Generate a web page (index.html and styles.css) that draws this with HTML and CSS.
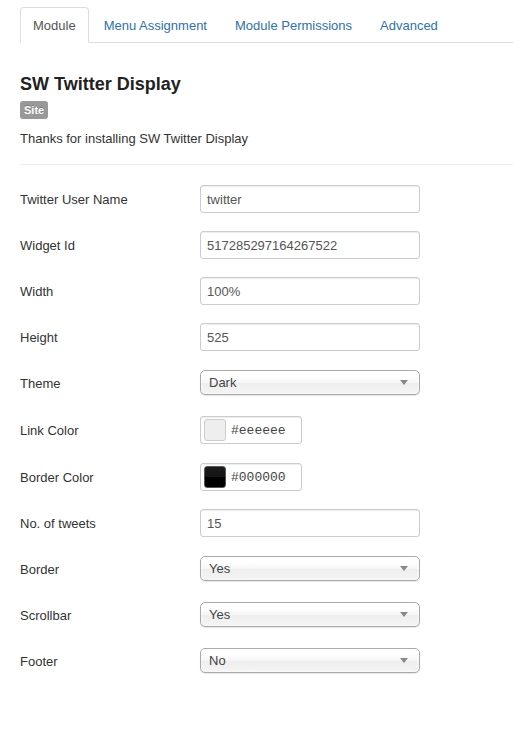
FILE: index.html
```html
<!DOCTYPE html>
<html>
<head>
<meta charset="utf-8">
<link rel="stylesheet" href="styles.css">
</head>
<body>
<div class="page">
  <ul class="tabs">
    <li class="tab active"><a>Module</a></li>
    <li class="tab"><a>Menu Assignment</a></li>
    <li class="tab"><a>Module Permissions</a></li>
    <li class="tab"><a>Advanced</a></li>
  </ul>

  <h2 class="title">SW Twitter Display</h2>
  <div class="badge-row"><span class="badge">Site</span></div>
  <p class="desc">Thanks for installing SW Twitter Display</p>
  <hr class="sep">

  <form class="form">
    <div class="group"><label>Twitter User Name</label><div class="input">twitter</div></div>
    <div class="group"><label>Widget Id</label><div class="input">517285297164267522</div></div>
    <div class="group"><label>Width</label><div class="input">100%</div></div>
    <div class="group"><label>Height</label><div class="input">525</div></div>
    <div class="group tall"><label>Theme</label><div class="select"><span>Dark</span><i class="arrow"></i></div></div>
    <div class="group tall"><label>Link Color</label><div class="input color"><span class="swatch light"></span><span class="hex">#eeeeee</span></div></div>
    <div class="group"><label>Border Color</label><div class="input color"><span class="swatch dark"></span><span class="hex">#000000</span></div></div>
    <div class="group"><label>No. of tweets</label><div class="input">15</div></div>
    <div class="group"><label>Border</label><div class="select"><span>Yes</span><i class="arrow"></i></div></div>
    <div class="group"><label>Scrollbar</label><div class="select"><span>Yes</span><i class="arrow"></i></div></div>
    <div class="group"><label>Footer</label><div class="select"><span>No</span><i class="arrow"></i></div></div>
  </form>
</div>
</body>
</html>
```

FILE: styles.css
```css
html, body {
  margin: 0;
  padding: 0;
  background: #fff;
}
body {
  font-family: "Liberation Sans", Arial, sans-serif;
  font-size: 13px;
  line-height: 18px;
  color: #333;
}
.page {
  padding: 7px 0 0 20px;
}
.tabs {
  list-style: none;
  margin: 0;
  padding: 0;
  display: flex;
  border-bottom: 1px solid #ddd;
}
.tab {
  margin-right: 2px;
  margin-bottom: -1px;
}
.tab a {
  display: block;
  padding: 9px 12px 7px;
  line-height: 18px;
  border: 1px solid transparent;
  border-radius: 4px 4px 0 0;
  color: #3071a9;
}
.tab.active a {
  color: #555;
  background: #fff;
  border-color: #ddd #ddd transparent;
}
.title {
  margin: 30px 0 0;
  font-size: 18px;
  line-height: 22px;
  font-weight: bold;
  color: #222;
}
.badge-row {
  display: flex;
  margin-top: 6px;
}
.badge {
  display: block;
  background: #999;
  color: #fff;
  font-size: 11px;
  font-weight: bold;
  line-height: 14px;
  padding: 2px 4px;
  border-radius: 3px;
  text-shadow: 0 -1px 0 rgba(0,0,0,.25);
}
.desc {
  margin: 11px 0 0;
}
.sep {
  margin: 16px 0 0;
  border: 0;
  border-top: 1px solid #eee;
}
.form {
  margin-top: 20px;
}
.group {
  display: flex;
  height: 28px;
  margin-bottom: 18px;
}
.group.tall {
  height: 29px;
}
.group label {
  width: 180px;
  flex: none;
  padding-top: 6px;
}
.input {
  box-sizing: border-box;
  width: 220px;
  height: 28px;
  padding: 5px 6px 3px;
  border: 1px solid #ccc;
  border-radius: 3px;
  box-shadow: inset 0 1px 1px rgba(0,0,0,.075);
  color: #555;
}
.input.color {
  width: 102px;
  padding: 2px 3px;
  display: flex;
  align-items: center;
  gap: 5px;
}
.swatch {
  box-sizing: border-box;
  width: 22px;
  height: 22px;
  border-radius: 3px;
  flex: none;
}
.swatch.light {
  background: #eee;
  border: 1px solid #ccc;
}
.swatch.dark {
  background: linear-gradient(#1c1c1c 0%, #141414 50%, #000 50%, #000 100%);
  border: 1px solid #555;
}
.hex {
  font-family: "Liberation Mono", "DejaVu Sans Mono", monospace;
  font-size: 13px;
  color: #444;
  padding-top: 1px;
}
.select {
  box-sizing: border-box;
  width: 220px;
  height: 25px;
  margin-top: 1px;
  padding: 0 8px;
  line-height: 23px;
  border: 1px solid #aaa;
  border-radius: 5px;
  color: #444;
  background: linear-gradient(#fff 20%, #f6f6f6 50%, #eee 52%, #f4f4f4 100%);
  box-shadow: inset 0 0 3px #fff, 0 1px 1px rgba(0,0,0,.1);
  display: flex;
  justify-content: space-between;
  align-items: center;
}
.arrow {
  width: 0;
  height: 0;
  border-left: 4px solid transparent;
  border-right: 4px solid transparent;
  border-top: 5px solid #888;
  margin-right: 3px;
}
```
